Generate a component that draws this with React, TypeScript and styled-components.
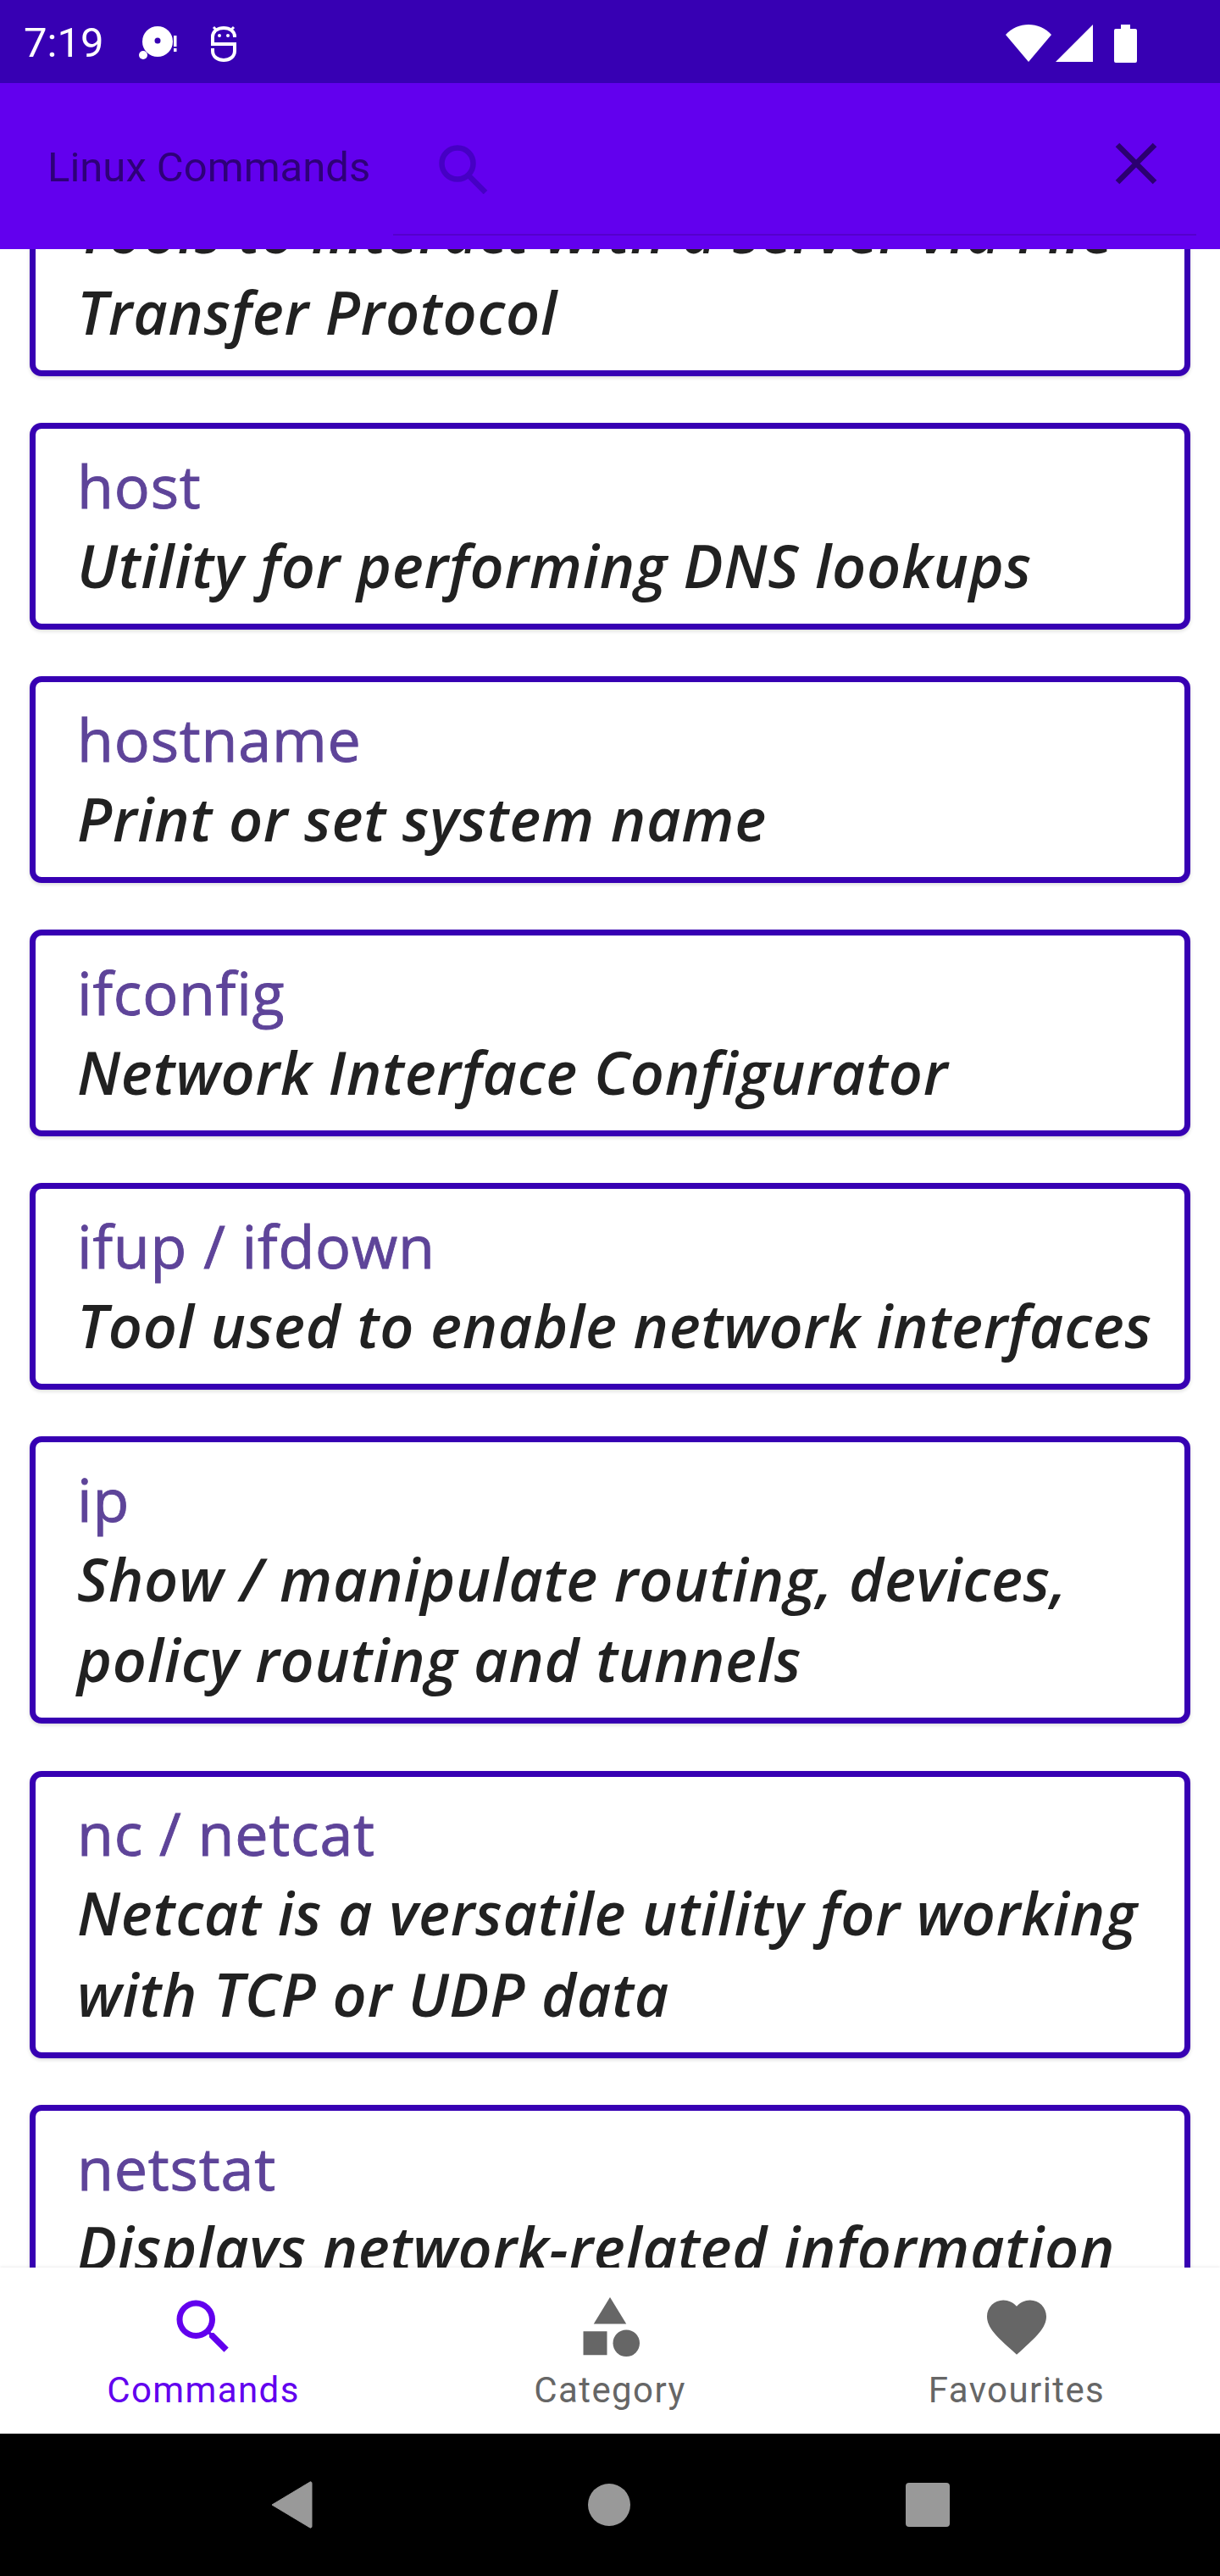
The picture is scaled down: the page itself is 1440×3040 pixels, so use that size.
import React from 'react';
import styled, { createGlobalStyle } from 'styled-components';

const GlobalStyle = createGlobalStyle`
  html, body {
    margin: 0;
    padding: 0;
    background: #fff;
  }
  * {
    box-sizing: border-box;
  }
`;

const Screen = styled.div`
  width: 1440px;
  height: 3040px;
  display: flex;
  flex-direction: column;
  overflow: hidden;
  background: #fff;
  font-family: Roboto, sans-serif;
`;

const StatusBar = styled.header`
  flex: 0 0 98px;
  background: #3700b3;
  color: #fff;
  display: flex;
  align-items: center;
  padding: 4px 98px 0 28px;
`;

const Clock = styled.span`
  font-size: 49px;
  line-height: 94px;
  width: 136px;
`;

const StatusGroup = styled.div<{ $gap: number }>`
  display: flex;
  align-items: center;
  gap: ${({ $gap }) => $gap}px;
`;

const Spacer = styled.div`
  flex: 1;
`;

const AppBar = styled.div`
  flex: 0 0 196px;
  background: #6200ee;
  display: flex;
  padding: 0 28px 0 56px;
  position: relative;
  z-index: 2;
`;

const AppTitle = styled.h1`
  margin: 0;
  width: 408px;
  font-size: 49px;
  font-weight: 400;
  line-height: 102px;
  padding-top: 49px;
  color: #2e0078;
`;

const SearchField = styled.div`
  flex: 1;
  height: 180px;
  display: flex;
  align-items: center;
  justify-content: space-between;
  padding: 12px 46px 0 54px;
  border-bottom: 2px solid #5500cc;
`;

const SearchIcon = styled.svg`
  margin-top: 14px;
`;

const List = styled.main`
  flex: 1;
  overflow: hidden;
  min-height: 0;
`;

const ScrolledList = styled.div`
  display: flex;
  flex-direction: column;
  gap: 55.5px;
  padding: 0 35px;
  margin-top: -189.5px;
`;

const Card = styled.article`
  border: 7px solid #3700b3;
  border-radius: 14px;
  background: #fff;
  padding: 19.5px 14px 20.5px 49px;
  box-shadow: 0 2px 4px rgba(0, 0, 0, 0.14);
`;

const CommandName = styled.div`
  font-family: 'Open Sans', sans-serif;
  font-weight: 400;
  font-size: 70px;
  line-height: 94px;
  letter-spacing: 0.8px;
  -webkit-text-stroke: 0.9px #5e4499;
  color: #5e4499;
`;

const CommandText = styled.div`
  font-family: 'Open Sans', sans-serif;
  font-style: italic;
  font-weight: 600;
  font-size: 70px;
  line-height: 95.5px;
  letter-spacing: 0.75px;
  color: #212121;
`;

const BottomNav = styled.nav`
  flex: 0 0 196px;
  background: #fff;
  display: grid;
  grid-template-columns: repeat(3, 1fr);
  position: relative;
  z-index: 2;
  box-shadow: 0 -1px 3px rgba(0, 0, 0, 0.08);
`;

const NavItem = styled.div<{ $active?: boolean }>`
  display: flex;
  flex-direction: column;
  align-items: center;
  padding-top: 28px;
  color: ${({ $active }) => ($active ? '#6200ee' : '#666666')};
`;

const NavIcon = styled.svg`
  width: 84px;
  height: 84px;
  display: block;
  fill: currentColor;
`;

const NavLabel = styled.span`
  font-size: 42px;
  line-height: 50px;
  letter-spacing: 1.4px;
  margin-top: 8px;
`;

const SystemBar = styled.footer`
  flex: 0 0 168px;
  background: #000;
  display: flex;
  align-items: center;
  justify-content: center;
  gap: 325px;
`;

const commands = [
  { name: 'ftp / sftp', text: 'Tools to interact with a server via File Transfer Protocol' },
  { name: 'host', text: 'Utility for performing DNS lookups' },
  { name: 'hostname', text: 'Print or set system name' },
  { name: 'ifconfig', text: 'Network Interface Configurator' },
  { name: 'ifup / ifdown', text: 'Tool used to enable network interfaces' },
  { name: 'ip', text: 'Show / manipulate routing, devices, policy routing and tunnels' },
  { name: 'nc / netcat', text: 'Netcat is a versatile utility for working with TCP or UDP data' },
  { name: 'netstat', text: 'Displays network-related information' },
];

const App = () => {
  return (
    <Screen>
      <GlobalStyle />
      <StatusBar>
        <Clock>7:19</Clock>
        <StatusGroup $gap={38}>
          <svg width="46" height="40" viewBox="0 0 46 40">
            <ellipse cx="22" cy="18" rx="18" ry="18" fill="#fff" />
            <circle cx="22" cy="17" r="3.5" fill="#3700b3" />
            <circle cx="5" cy="34" r="5" fill="#fff" />
            <rect x="41" y="11" width="3.5" height="13" fill="#fff" />
            <rect x="41" y="26" width="3.5" height="4" fill="#fff" />
          </svg>
          <svg width="32" height="44" viewBox="0 0 32 44" fill="none">
            <path d="M29 15v-1C29 8 23 4 16 4S3 8 3 14v9h26v8c0 7-6 11-13 11S3 38 3 31v-3" stroke="#fff" strokeWidth="4" />
            <circle cx="11" cy="13" r="2" fill="#fff" />
            <circle cx="21" cy="13" r="2" fill="#fff" />
            <path d="M4 3l4 4M28 3l-4 4" stroke="#fff" strokeWidth="3" />
          </svg>
        </StatusGroup>
        <Spacer />
        <StatusGroup $gap={5}>
          <svg width="54" height="44" viewBox="0 0 54 44">
            <path d="M0 12C7 4 17 0 27 0s20 4 27 12L27 44z" fill="#fff" />
          </svg>
          <svg width="44" height="44" viewBox="0 0 44 44" style={{ marginRight: 20 }}>
            <path d="M44 0v44H0z" fill="#fff" />
          </svg>
          <svg width="27" height="45" viewBox="0 0 27 45">
            <path d="M8 0h11v5h6a2 2 0 0 1 2 2v36a2 2 0 0 1-2 2H2a2 2 0 0 1-2-2V7a2 2 0 0 1 2-2h6z" fill="#fff" />
          </svg>
        </StatusGroup>
      </StatusBar>
      <AppBar>
        <AppTitle>Linux Commands</AppTitle>
        <SearchField>
          <SearchIcon width="58" height="58" viewBox="0 0 58 58" fill="none">
            <circle cx="22" cy="22" r="18.5" stroke="#4600c4" strokeWidth="6.5" />
            <path d="M35 36l20 20" stroke="#4600c4" strokeWidth="6.5" />
          </SearchIcon>
          <svg width="50" height="50" viewBox="0 0 50 50" fill="none">
            <path d="M3 3l44 44M47 3L3 47" stroke="#2b0070" strokeWidth="6.5" />
          </svg>
        </SearchField>
      </AppBar>
      <List>
        <ScrolledList>
          {commands.map((command) => (
            <Card key={command.name}>
              <CommandName>{command.name}</CommandName>
              <CommandText>{command.text}</CommandText>
            </Card>
          ))}
        </ScrolledList>
      </List>
      <BottomNav>
        <NavItem $active>
          <NavIcon viewBox="0 0 24 24">
            <path d="M15.5 14h-.79l-.28-.27A6.471 6.471 0 0 0 16 9.5 6.5 6.5 0 1 0 9.5 16c1.61 0 3.09-.59 4.23-1.57l.27.28v.79l5 4.99L20.49 19l-4.99-5zm-6 0C7.01 14 5 11.99 5 9.5S7.01 5 9.5 5 14 7.01 14 9.5 11.99 14 9.5 14z" />
          </NavIcon>
          <NavLabel>Commands</NavLabel>
        </NavItem>
        <NavItem>
          <NavIcon viewBox="0 0 24 24">
            <path d="M12 2l-5.5 9h11z" />
            <circle cx="17.5" cy="17.5" r="4.5" />
            <path d="M3 13.5h8v8H3z" />
          </NavIcon>
          <NavLabel>Category</NavLabel>
        </NavItem>
        <NavItem>
          <NavIcon viewBox="0 0 24 24">
            <path d="M12 21.35l-1.45-1.32C5.4 15.36 2 12.28 2 8.5 2 5.42 4.42 3 7.5 3c1.74 0 3.41.81 4.5 2.09C13.09 3.81 14.76 3 16.5 3 19.58 3 22 5.42 22 8.5c0 3.78-3.4 6.86-8.55 11.54L12 21.35z" />
          </NavIcon>
          <NavLabel>Favourites</NavLabel>
        </NavItem>
      </BottomNav>
      <SystemBar>
        <svg width="49" height="56" viewBox="0 0 49 56">
          <path d="M1 28L46 1c1-.5 2 .3 2 1.500v51c0 1.200-1 2-2 1.500z" fill="#999" stroke="#999" strokeLinejoin="round" strokeWidth="1" />
        </svg>
        <svg width="50" height="50" viewBox="0 0 50 50">
          <circle cx="25" cy="25" r="25" fill="#999" />
        </svg>
        <svg width="52" height="52" viewBox="0 0 52 52">
          <rect width="52" height="52" rx="4" fill="#999" />
        </svg>
      </SystemBar>
    </Screen>
  );
};

export default App;
